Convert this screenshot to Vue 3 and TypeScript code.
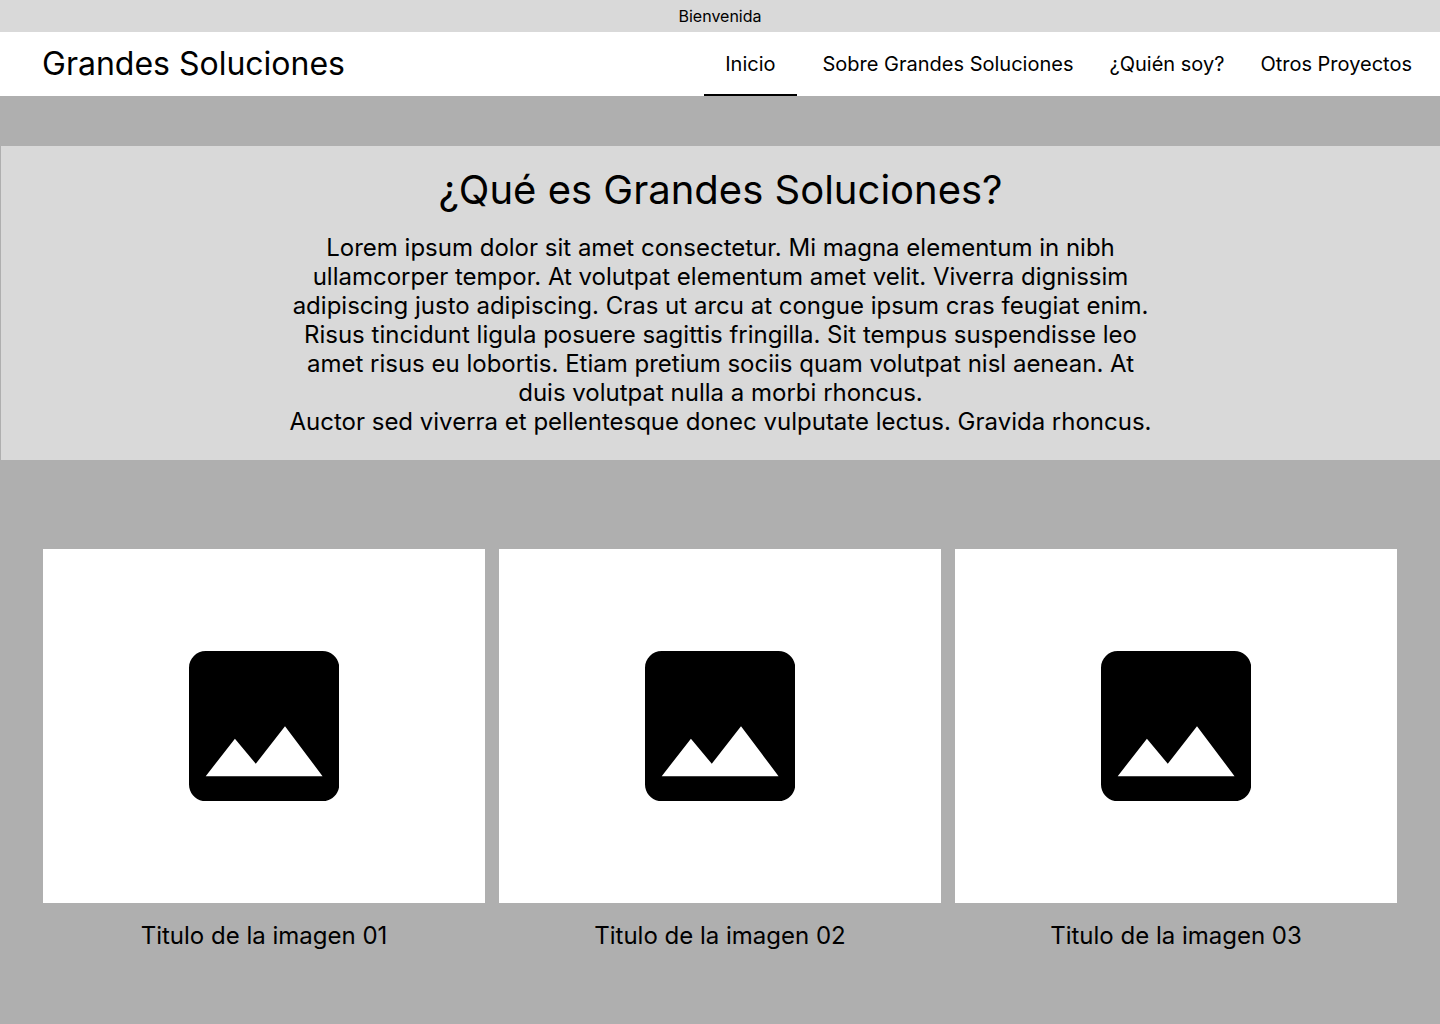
<script setup lang="ts">
interface NavItem {
  label: string
  href: string
  active?: boolean
}

const navItems: NavItem[] = [
  { label: 'Inicio', href: '#inicio', active: true },
  { label: 'Sobre Grandes Soluciones', href: '#sobre' },
  { label: '¿Quién soy?', href: '#quien-soy' },
  { label: 'Otros Proyectos', href: '#proyectos' },
]

const images: string[] = [
  'Titulo de la imagen 01',
  'Titulo de la imagen 02',
  'Titulo de la imagen 03',
]
</script>

<template>
  <div class="page">
    <div class="welcome">Bienvenida</div>
    <header class="header">
      <div class="brand">Grandes Soluciones</div>
      <nav class="nav">
        <a
          v-for="item in navItems"
          :key="item.href"
          :href="item.href"
          class="nav-link"
          :class="{ active: item.active }"
        >{{ item.label }}</a>
      </nav>
    </header>
    <main>
      <section class="intro">
        <h1>¿Qué es Grandes Soluciones?</h1>
        <p>
          Lorem ipsum dolor sit amet consectetur. Mi magna elementum in nibh ullamcorper tempor. At volutpat elementum amet velit. Viverra dignissim adipiscing justo adipiscing. Cras ut arcu at congue ipsum cras feugiat enim. Risus tincidunt ligula posuere sagittis fringilla. Sit tempus suspendisse leo amet risus eu lobortis. Etiam pretium sociis quam volutpat nisl aenean. At duis volutpat nulla a morbi rhoncus.<br>Auctor sed viverra et pellentesque donec vulputate lectus. Gravida rhoncus.
        </p>
      </section>
      <section class="gallery">
        <figure v-for="title in images" :key="title" class="card">
          <div class="picture">
            <svg class="icon" viewBox="3 3 18 18" aria-hidden="true">
              <path
                fill-rule="evenodd"
                d="M21 19V5c0-1.100-.9-2-2-2H5c-1.100 0-2 .9-2 2v14c0 1.100.9 2 2 2h14c1.100 0 2-.9 2-2zM8.500 13.500l2.500 3.010L14.500 12l4.500 6H5l3.500-4.500z"
              />
            </svg>
          </div>
          <figcaption>{{ title }}</figcaption>
        </figure>
      </section>
    </main>
  </div>
</template>

<style>
body {
  background: #afafaf;
}
</style>

<style scoped>
.page {
  font-family: Inter, sans-serif;
  color: #000;
  background: #afafaf;
}

.welcome {
  height: 32px;
  line-height: 32px;
  font-size: 16px;
  text-align: center;
  background: #d9d9d9;
}

.header {
  display: flex;
  align-items: center;
  justify-content: space-between;
  height: 64px;
  padding: 0 12px 0 42px;
  background: #fff;
}

.brand {
  font-size: 32px;
  line-height: 40px;
}

.nav {
  display: flex;
  gap: 4px;
  height: 100%;
}

.nav-link {
  box-sizing: border-box;
  padding: 0 16px;
  border-bottom: 2px solid transparent;
  font-size: 20px;
  line-height: 64px;
  color: inherit;
  text-decoration: none;
}

.nav-link.active {
  margin-right: 6px;
  padding: 0 21px;
  border-bottom-color: #000;
}

.intro {
  margin: 50px 0 0 1px;
  padding: 20px 0 24px;
  text-align: center;
  background: #d9d9d9;
}

h1 {
  margin: 0;
  font-size: 40px;
  font-weight: 400;
  line-height: 48px;
}

p {
  max-width: 864px;
  margin: 19px auto 0;
  font-size: 24px;
  line-height: 29px;
}

.gallery {
  display: grid;
  grid-template-columns: repeat(3, 1fr);
  gap: 14px;
  padding: 89px 43px 73px;
}

.card {
  margin: 0;
}

.picture {
  display: flex;
  align-items: center;
  justify-content: center;
  aspect-ratio: 442 / 354;
  background: #fff;
}

.icon {
  width: 34%;
}

figcaption {
  margin-top: 18px;
  font-size: 24px;
  line-height: 30px;
  text-align: center;
}
</style>
